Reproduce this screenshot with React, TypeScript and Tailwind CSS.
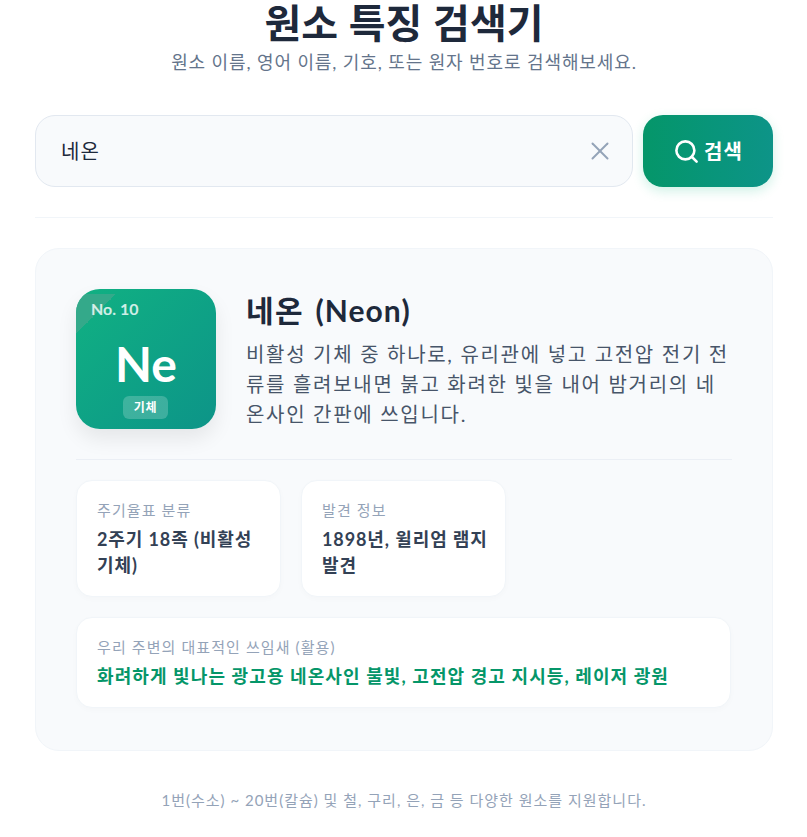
import React from "react";
import { Search, X } from "lucide-react";

function InfoCard({ label, children, tone = "tracking-[0.9px] text-[#334155]" }: { label: string; children: React.ReactNode; tone?: string }) {
	return (
		<div className="rounded-2xl border border-[#f1f5f9] bg-white pt-[19px] pr-[15px] pb-[18px] pl-5 shadow-[0_2px_6px_rgba(0,0,0,0.02)]">
			<div className="mb-[5px] text-[15px] leading-[21px] tracking-[1.1px] text-[#94a3b8]">{label}</div>
			<div className={`text-[18px] leading-[26px] font-bold ${tone}`}>{children}</div>
		</div>
	);
}

export default function App() {
	return (
		<div className="min-h-[837px] bg-white pr-[34px] pl-[35px] font-['Lato','Noto_Sans_CJK_KR',sans-serif]">
			<h1 className="text-center text-[40px] leading-[46px] font-bold [word-spacing:1px] text-[#1e293b]">원소 특징 검색기</h1>
			<p className="mt-[3px] text-center text-[18px] leading-[27px] tracking-[0.9px] text-[#64748b]">
				원소 이름, 영어 이름, 기호, 또는 원자 번호로 검색해보세요.
			</p>

			<div className="mt-[39px] flex gap-[10px]">
				<div className="flex h-[72px] flex-1 items-center rounded-[20px] border border-[#e2e8f0] bg-[#f8fafc] pr-[17px] pl-[25px]">
					<span className="flex-1 text-[20px] tracking-[1.2px] text-[#1e293b]">네온</span>
					<X size={30} strokeWidth={1.6} className="text-[#94a3b8]" />
				</div>
				<button
					type="button"
					className="flex h-[72px] w-[130px] items-center justify-center gap-[4px] rounded-[20px] bg-gradient-to-r from-[#059669] to-[#0d9488] text-[20px] font-bold tracking-[1px] text-white shadow-[0_4px_12px_rgba(16,185,129,0.2)]"
				>
					<Search size={27} strokeWidth={2.3} />
					검색
				</button>
			</div>

			<div className="mt-[30px] border-t border-[#f1f5f9]" />

			<div className="mt-[30px] rounded-[24px] border border-[#f1f5f9] bg-[#f8fafc] px-[40px] pt-[40px] pb-[42px]">
				<div className="flex gap-[30px] border-b border-[#e2e8f0]/60 pb-[30px]">
					<div className="relative h-[140px] w-[140px] shrink-0 overflow-hidden rounded-[24px] bg-gradient-to-br from-[#11b182] to-[#0d9488] shadow-[0_10px_20px_rgba(0,0,0,0.08)]">
						<div className="absolute top-[5px] left-0 h-[40px] w-[40px] bg-gradient-to-br from-[#34a98a] from-50% to-transparent to-50%" />
						<span className="absolute top-[9px] left-[15px] text-[16px] leading-[22px] font-bold text-white/80">No. 10</span>
						<span className="absolute inset-x-0 top-[42px] text-center text-[48px] leading-[66px] font-bold text-white">Ne</span>
						<span className="absolute top-[107px] left-[47px] w-[45px] rounded-md bg-white/20 text-center text-[12px] leading-[23px] font-bold tracking-[0.8px] text-white">기체</span>
					</div>
					<div className="min-w-0 flex-1">
						<h2 className="text-[30px] leading-[42px] font-bold text-[#1e293b]">
							<span className="tracking-[1.5px]">네온</span> <span className="ml-[4px] tracking-[1px]">(Neon)</span>
						</h2>
						<p className="mt-[8px] text-[20px] leading-[30px] tracking-[1.7px] text-[#475569] [line-break:anywhere]">
							비활성 기체 중 하나로, 유리관에 넣고 고전압 전기 전류를 흘려보내면 붉고 화려한 빛을 내어 밤거리의 네온사인 간판에 쓰입니다.
						</p>
					</div>
				</div>

				<div className="mt-[20px] grid grid-cols-[205px_205px] gap-[20px]">
					<InfoCard label="주기율표 분류">2주기 18족 (비활성 기체)</InfoCard>
					<InfoCard label="발견 정보">1898년, 윌리엄 램지 발견</InfoCard>
				</div>
				<div className="mt-[20px] w-[655px]">
					<InfoCard label="우리 주변의 대표적인 쓰임새 (활용)" tone="tracking-[1.1px] text-[#059669]">
						화려하게 빛나는 광고용 네온사인 불빛, 고전압 경고 지시등, 레이저 광원
					</InfoCard>
				</div>
			</div>

			<p className="mt-[38px] text-center text-[15px] leading-[22px] tracking-[1px] text-[#94a3b8]">
				1번(수소) ~ 20번(칼슘) 및 철, 구리, 은, 금 등 다양한 원소를 지원합니다.
			</p>
		</div>
	);
}
